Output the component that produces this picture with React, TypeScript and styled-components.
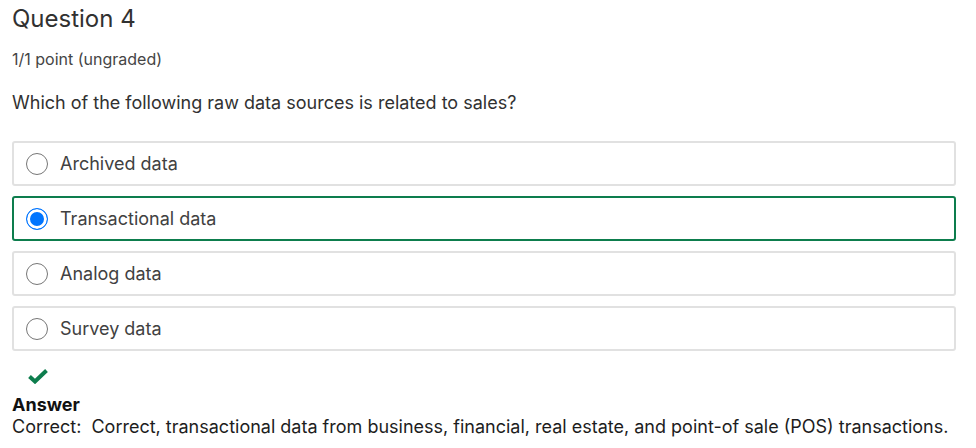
import React from "react";
import styled, { createGlobalStyle } from "styled-components";

const Global = createGlobalStyle`
  html, body { margin: 0; padding: 0; background: #fff; }
  body { font-family: Inter, "Noto Sans", sans-serif; color: #333; }
`;

const Page = styled.div`
  padding: 4px 20px 0 12px;
  display: flex;
  flex-direction: column;
`;

const Title = styled.h3`
  margin: 0;
  font-size: 24px;
  font-weight: 400;
  line-height: 30px;
  color: #313131;
`;

const Points = styled.div`
  margin-top: 15px;
  font-size: 16px;
  line-height: 20px;
  color: #454545;
`;

const Prompt = styled.p`
  margin: 23px 0 0;
  font-size: 18px;
  line-height: 22px;
  color: #313131;
`;

const Options = styled.div`
  margin-top: 27px;
  display: flex;
  flex-direction: column;
  gap: 10px;
`;

const Option = styled.label<{ $selected?: boolean }>`
  box-sizing: border-box;
  height: 45px;
  display: flex;
  align-items: center;
  gap: 12px;
  padding: 0 12px;
  border: 2px solid ${(p) => (p.$selected ? "#0d7d4d" : "#e1e1e1")};
  border-radius: 3px;
  font-size: 18px;
  color: #414141;
`;

const Radio = styled.span<{ $checked?: boolean }>`
  box-sizing: border-box;
  width: 22px;
  height: 22px;
  border-radius: 50%;
  flex: none;
  border: 1px solid ${(p) => (p.$checked ? "#0075ff" : "#767676")};
  background: ${(p) => (p.$checked ? "#0075ff" : "#fff")};
  box-shadow: ${(p) => (p.$checked ? "inset 0 0 0 3px #fff" : "none")};
`;

const Check = styled.div`
  margin: 18px 0 0 16px;
  height: 14px;
  display: flex;
  align-items: center;
`;

const AnswerLabel = styled.div`
  margin-top: 11px;
  font-size: 18px;
  font-weight: 700;
  line-height: 22px;
  color: #111;
`;

const AnswerText = styled.div`
  font-size: 18px;
  line-height: 22px;
  color: #1d1d1d;
  white-space: pre;
`;

const options = [
  { label: "Archived data" },
  { label: "Transactional data", selected: true },
  { label: "Analog data" },
  { label: "Survey data" },
];

export default function App() {
  return (
    <>
      <Global />
      <Page>
        <Title>Question 4</Title>
        <Points>1/1 point (ungraded)</Points>
        <Prompt>Which of the following raw data sources is related to sales?</Prompt>
        <Options>
          {options.map((o) => (
            <Option key={o.label} $selected={o.selected}>
              <Radio $checked={o.selected} />
              {o.label}
            </Option>
          ))}
        </Options>
        <Check>
          <svg width="20" height="15" viewBox="0 0 20 15">
            <path d="M1.5 7.5 L7 12.5 L18.5 1.5" fill="none" stroke="#0d7d4d" strokeWidth="4" strokeLinejoin="miter" />
          </svg>
        </Check>
        <AnswerLabel>Answer</AnswerLabel>
        <AnswerText>Correct:  Correct, transactional data from business, financial, real estate, and point-of sale (POS) transactions.</AnswerText>
      </Page>
    </>
  );
}
